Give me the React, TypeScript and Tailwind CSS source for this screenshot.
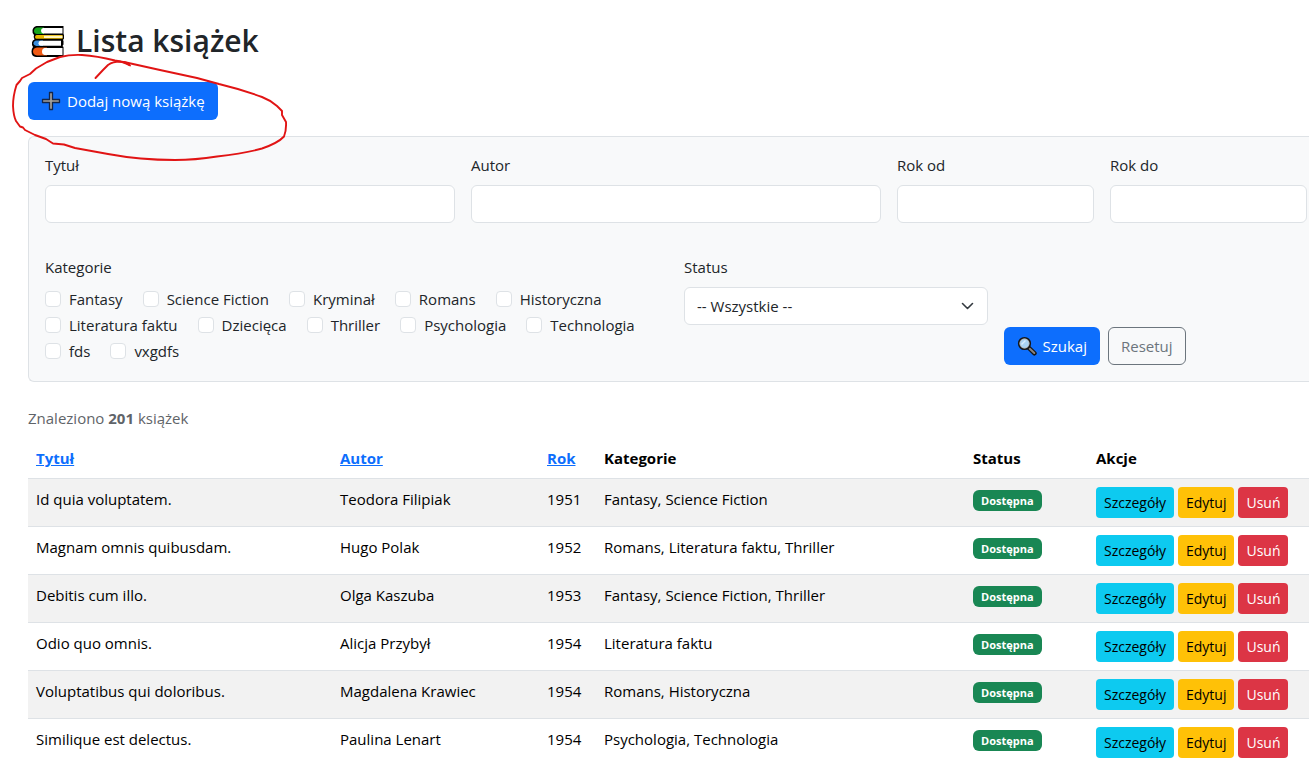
import React from 'react';

const categories = [
  'Fantasy',
  'Science Fiction',
  'Kryminał',
  'Romans',
  'Historyczna',
  'Literatura faktu',
  'Dziecięca',
  'Thriller',
  'Psychologia',
  'Technologia',
  'fds',
  'vxgdfs',
];

const books = [
  { title: 'Id quia voluptatem.', author: 'Teodora Filipiak', year: 1951, categories: 'Fantasy, Science Fiction' },
  { title: 'Magnam omnis quibusdam.', author: 'Hugo Polak', year: 1952, categories: 'Romans, Literatura faktu, Thriller' },
  { title: 'Debitis cum illo.', author: 'Olga Kaszuba', year: 1953, categories: 'Fantasy, Science Fiction, Thriller' },
  { title: 'Odio quo omnis.', author: 'Alicja Przybył', year: 1954, categories: 'Literatura faktu' },
  { title: 'Voluptatibus qui doloribus.', author: 'Magdalena Krawiec', year: 1954, categories: 'Romans, Historyczna' },
  { title: 'Similique est delectus.', author: 'Paulina Lenart', year: 1954, categories: 'Psychologia, Technologia' },
];

function BooksIcon() {
  return (
    <svg className="h-9 w-10 shrink-0" viewBox="0 0 40 36" aria-hidden="true">
      <path
        d="M8.500 3H35.500V11L36 12V15.500L35 17L35.500 18V21.500L34.500 23L35.500 24V34H8Q3.500 33.500 3.500 28.500Q3.500 25.500 5 24Q3.500 22 4 19.500Q4.500 17 6.500 16.500Q5 14.500 6 12Q4 10 4.500 7Q5.500 3.500 8.500 3Z"
        fill="#000"
      />
      <path d="M9 4.500H16V11H9Q6 10.500 6 8Q6 5 9 4.500Z" fill="#16a51c" />
      <path d="M15 5H34.500V10.500H15Q13 10 13 7.800Q13 5.500 15 5Z" fill="#fff" />
      <path d="M8.500 12H34.500V15.800H8.500Q7 15.500 7 14Q7 12.300 8.500 12Z" fill="#e8b800" />
      <path d="M16 12.800H34.500V15H16Z" fill="#fff5c0" />
      <path d="M8.500 17.500H15V23H8.500Q5.500 22.500 5.500 20.300Q5.500 18 8.500 17.500Z" fill="#3b8ede" />
      <path d="M12.500 17.800H33V22.800H12.500Q10.500 22.500 10.500 20.300Q10.500 18 12.500 17.800Z" fill="#fff" />
      <path d="M9 24.500H19V32.500H9Q5 32 5 28.500Q5 25 9 24.500Z" fill="#f05a14" />
      <path d="M16.500 25H34.500V32H16.500Q14 31.500 14 28.500Q14 25.500 16.500 25Z" fill="#fff" />
    </svg>
  );
}

function PlusIcon() {
  return (
    <svg className="size-5 shrink-0" viewBox="0 0 20 20" aria-hidden="true">
      <path
        d="M8.500 1.500H11.500V8.500H18.500V11.500H11.500V18.500H8.500V11.500H1.500V8.500H8.500Z"
        fill="#a3a09b"
        stroke="#14264a"
        strokeWidth="1.300"
        strokeLinejoin="round"
      />
    </svg>
  );
}

function SearchIcon() {
  return (
    <svg className="size-5 shrink-0" viewBox="0 0 20 20" aria-hidden="true">
      <path d="M11 11L17.500 17.300" stroke="#151515" strokeWidth="4.400" strokeLinecap="round" />
      <path d="M12.500 12.500L17.300 17" stroke="#8b8580" strokeWidth="2" strokeLinecap="round" />
      <circle cx="7.500" cy="7.500" r="5.700" fill="#a9d3f5" stroke="#151515" strokeWidth="1.800" />
      <circle cx="7.500" cy="7.500" r="4.600" fill="none" stroke="#b9b9b9" strokeWidth="0.900" />
      <path d="M4.500 8.500L8.500 4.500" stroke="#d8eeff" strokeWidth="1.500" />
    </svg>
  );
}

function RedMarking() {
  return (
    <svg
      className="pointer-events-none absolute left-0 top-0 h-[170px] w-[300px]"
      viewBox="0 0 300 170"
      fill="none"
      stroke="#e11414"
      strokeWidth="1.900"
      strokeLinecap="round"
      strokeLinejoin="round"
      aria-hidden="true"
    >
      <path d="M95.500 78L103 70L108 65Q113 61.500 120 61.500Q127 62 130 65.500" />
      <path d="M129 65Q124 62 115 60.500Q97 56 82 55Q70 54.500 60 57L47 62L36 68.500L30 74L22 78L20 81L16.500 85Q13 96 13 106Q13.500 116 16 121L20 126.500L23 127.500L25 130L35 135L46 139L53 143.500L64 144.500L75 148L108 154Q140 160 175 160Q195 160 217 156.500Q245 153.500 262 148.500Q278 143 284 136.500Q286.500 130 286 122L282 115V111L277 106Q270 100 262 97Q240 89 219 84L197 78L160 70L124 62" />
    </svg>
  );
}

function TextField({ id, label, span }: { id: string; label: string; span: string }) {
  return (
    <div className={span}>
      <label htmlFor={id} className="mb-2 block">
        {label}
      </label>
      <input id={id} type="text" className="block h-[38px] w-full rounded-md border border-[#dee2e6] bg-white px-3" />
    </div>
  );
}

export default function App() {
  return (
    <div className="relative overflow-hidden bg-white pl-7 font-['Open_Sans','Noto_Sans',sans-serif] text-[15px] leading-6 text-[#212529]">
      <h1 className="flex h-[82px] items-center gap-2 text-[30px] font-semibold">
        <BooksIcon />
        <span>Lista książek</span>
      </h1>
      <button type="button" className="flex h-[38px] items-center gap-1.5 rounded-md bg-[#0d6efd] px-[13px] text-white">
        <PlusIcon />
        <span>Dodaj nową książkę</span>
      </button>

      <form className="mt-4 grid grid-cols-12 gap-4 rounded-l-md border border-r-0 border-[#dee2e6] bg-[#f8f9fa] py-4 pl-4 pr-0.5">
        <TextField id="title" label="Tytuł" span="col-span-4 mb-4" />
        <TextField id="author" label="Autor" span="col-span-4 mb-4" />
        <TextField id="year-from" label="Rok od" span="col-span-2 mb-4" />
        <TextField id="year-to" label="Rok do" span="col-span-2 mb-4" />

        <fieldset className="col-span-6">
          <legend className="mb-2">Kategorie</legend>
          <div className="flex flex-wrap gap-x-5 gap-y-0.5 pb-0.5">
            {categories.map((name) => (
              <label key={name} className="flex items-center gap-2">
                <input type="checkbox" className="size-4 appearance-none rounded border border-[#dee2e6] bg-white checked:bg-[#0d6efd]" />
                {name}
              </label>
            ))}
          </div>
        </fieldset>
        <div className="col-span-3">
          <label htmlFor="status" className="mb-2 block">
            Status
          </label>
          <div className="relative">
            <select id="status" className="block h-[38px] w-full appearance-none rounded-md border border-[#dee2e6] bg-white pl-3 pr-9">
              <option>-- Wszystkie --</option>
            </select>
            <svg className="pointer-events-none absolute right-3 top-[11px] h-4 w-4" viewBox="0 0 16 16" fill="none" stroke="#343a40" strokeWidth="1.600" strokeLinecap="round" strokeLinejoin="round" aria-hidden="true">
              <path d="m2.500 5.500 5 5 5-5" />
            </svg>
          </div>
        </div>
        <div className="col-span-3 flex items-end gap-2">
          <button type="submit" className="flex h-[38px] items-center gap-1.5 rounded-md bg-[#0d6efd] px-[13px] text-white">
            <SearchIcon />
            <span>Szukaj</span>
          </button>
          <button type="reset" className="h-[38px] rounded-md border border-[#6c757d] px-3 text-[#6c757d]">
            Resetuj
          </button>
        </div>
      </form>

      <p className="mb-2 mt-6 text-[#5f6469]">
        Znaleziono <strong className="font-bold">201</strong> książek
      </p>

      <table className="w-full table-fixed border-separate border-spacing-0 text-left text-black">
        <colgroup>
          <col className="w-[304px]" />
          <col className="w-[207px]" />
          <col className="w-[57px]" />
          <col className="w-[369px]" />
          <col className="w-[123px]" />
          <col />
        </colgroup>
        <thead>
          <tr className="[&>th]:border-b [&>th]:border-[#dee2e6] [&>th]:p-2 [&>th]:font-bold">
            <th scope="col"><a href="#title" className="text-[#0d6efd] underline">Tytuł</a></th>
            <th scope="col"><a href="#author" className="text-[#0d6efd] underline">Autor</a></th>
            <th scope="col"><a href="#year" className="text-[#0d6efd] underline">Rok</a></th>
            <th scope="col">Kategorie</th>
            <th scope="col">Status</th>
            <th scope="col">Akcje</th>
          </tr>
        </thead>
        <tbody>
          {books.map((book) => (
            <tr key={book.title} className="odd:bg-[#f2f2f2] [&>td]:border-b [&>td]:border-[#dee2e6] [&>td]:p-2 [&>td]:align-top">
              <td>{book.title}</td>
              <td>{book.author}</td>
              <td>{book.year}</td>
              <td>{book.categories}</td>
              <td>
                <div className="flex h-[27px] items-center">
                  <span className="flex h-[21px] items-center rounded-md bg-[#198754] px-2 text-[11px] font-bold leading-none text-white">Dostępna</span>
                </div>
              </td>
              <td>
                <div className="flex gap-1 text-[14px]">
                  <a href="#details" className="flex h-[31px] items-center rounded bg-[#0dcaf0] px-2">Szczegóły</a>
                  <a href="#edit" className="flex h-[31px] items-center rounded bg-[#ffc107] px-2">Edytuj</a>
                  <button type="button" className="h-[31px] rounded bg-[#dc3545] px-2 text-white">Usuń</button>
                </div>
              </td>
            </tr>
          ))}
        </tbody>
      </table>
      <RedMarking />
    </div>
  );
}
